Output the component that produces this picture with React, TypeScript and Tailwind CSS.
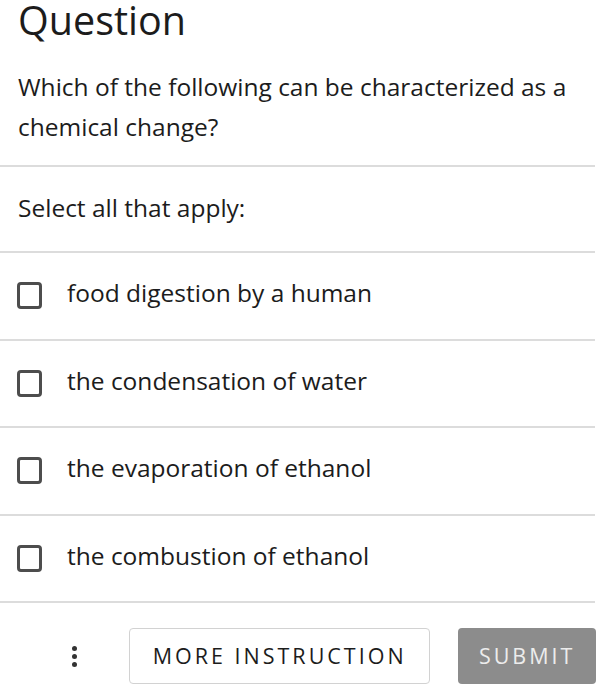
import React from "react"

const options = [
  "food digestion by a human",
  "the condensation of water",
  "the evaporation of ethanol",
  "the combustion of ethanol",
]

function Checkbox() {
  return <span className="block h-[27px] w-[25px] shrink-0 rounded-[4px] border-[3px] border-[#4d4d4d] bg-white" />
}

export default function App() {
  return (
    <div className="h-[689px] w-[596px] overflow-hidden bg-white font-['Open_Sans',sans-serif] text-[#1c1c1c]">
      <div className="px-[18px]">
        <h1 className="text-[39.5px] leading-[40px] font-normal">Question</h1>
        <p className="mt-[27px] text-[24.5px] leading-[40px]">
          Which of the following can be characterized as a chemical change?
        </p>
      </div>
      <div className="mt-[18px] mr-px border-t-2 border-[#dcdcdc]" />
      <div className="mr-px flex h-[86px] items-center border-b-2 border-[#dcdcdc] px-[18px] pb-[2px] text-[24.5px]">
        Select all that apply:
      </div>
      {options.map((o) => (
        <label
          key={o}
          className="mr-px flex h-[87.5px] items-center gap-[25px] border-b-2 border-[#dcdcdc] pl-[17px] text-[24.5px]"
        >
          <Checkbox />
          <span className="pb-[4px]">{o}</span>
        </label>
      ))}
      <div className="flex items-center pt-[25px]">
        <div className="ml-[72px] flex w-[6px] flex-col items-center gap-[3px]">
          <span className="h-[5px] w-[5px] rounded-full bg-[#333]" />
          <span className="h-[5px] w-[5px] rounded-full bg-[#333]" />
          <span className="h-[5px] w-[5px] rounded-full bg-[#333]" />
        </div>
        <button className="ml-[51px] h-[56px] w-[302px] rounded-[4px] border border-[#d2d2d2] bg-white text-[21.5px] tracking-[3px] text-[#1c1c1c]">
          MORE INSTRUCTION
        </button>
        <button className="ml-[28px] h-[56px] w-[138px] rounded-[4px] bg-[#8c8c8c] text-[21.5px] tracking-[3px] text-[#ececec]">
          SUBMIT
        </button>
      </div>
    </div>
  )
}
